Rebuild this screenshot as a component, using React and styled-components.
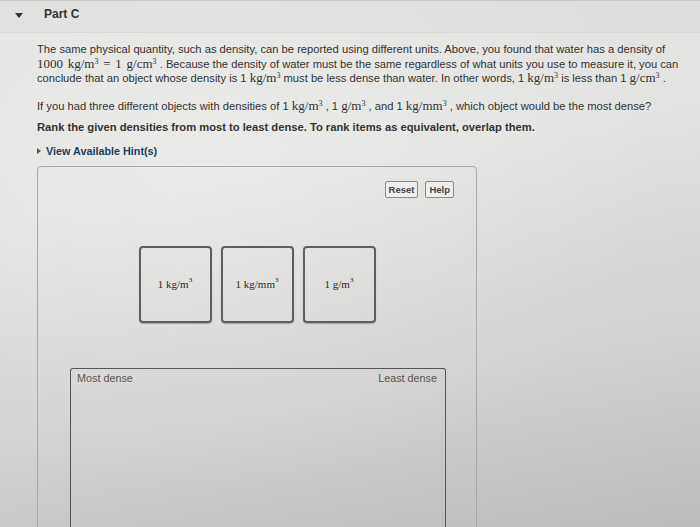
import React from "react";
import styled, { createGlobalStyle } from "styled-components";

const GlobalStyle = createGlobalStyle`
  html, body {
    margin: 0;
    padding: 0;
    height: 100%;
    overflow: hidden;
  }
  body {
    font-family: "Liberation Sans", Arial, sans-serif;
    color: #333;
    background: linear-gradient(170deg, #e4e4e2 0%, #e3e3e1 35%, #d2d1cf 70%, #bdbcba 100%);
  }
`;

const Page = styled.div`
  width: 700px;
  height: 527px;
  overflow: hidden;
  background: radial-gradient(ellipse at 30% 30%, rgba(255, 255, 255, 0.25), rgba(255, 255, 255, 0) 65%);
`;

const Header = styled.div`
  display: flex;
  align-items: center;
  gap: 21px;
  height: 31px;
  padding-left: 15px;
  border-top: 1px solid #c9c9c7;
  border-bottom: 1px solid #d9d9d7;
  background: rgba(0, 0, 0, 0.02);
`;

const Caret = styled.span`
  width: 0;
  height: 0;
  border-left: 4px solid transparent;
  border-right: 4px solid transparent;
  border-top: 5px solid #333;
  margin-top: -3px;
`;

const PartTitle = styled.div`
  font-size: 12px;
  font-weight: bold;
  color: #333;
  margin-top: -5px;
`;

const Body = styled.div`
  padding: 9px 0 0 37px;
  width: 656px;
`;

const Para = styled.p`
  margin: 0 0 ${(p) => p.$gap || 9}px 0;
  font-size: 11.2px;
  line-height: 14.5px;
  font-weight: ${(p) => (p.$bold ? "bold" : "normal")};
`;

const M = styled.span`
  font-family: "Liberation Serif", "Times New Roman", serif;
  font-size: 13px;
  line-height: 1;
  word-spacing: 1.5px;
  white-space: nowrap;
  sup {
    font-size: 8px;
    position: relative;
    top: -4px;
    vertical-align: baseline;
    line-height: 0;
  }
`;

const Hint = styled.div`
  display: flex;
  align-items: center;
  gap: 5px;
  font-size: 10.8px;
  font-weight: bold;
  color: #1d3f5c;
  margin-top: 10px;
`;

const HintCaret = styled.span`
  width: 0;
  height: 0;
  border-top: 3px solid transparent;
  border-bottom: 3px solid transparent;
  border-left: 4px solid #555;
`;

const Panel = styled.div`
  margin-top: 9px;
  width: 440px;
  height: 400px;
  box-sizing: border-box;
  border: 1px solid #a9a9a7;
  border-radius: 4px;
  padding: 14px 22px 0 32px;
  display: flex;
  flex-direction: column;
`;

const Toolbar = styled.div`
  display: flex;
  justify-content: flex-end;
  gap: 7px;
`;

const SmallButton = styled.button`
  font-family: "Liberation Sans", Arial, sans-serif;
  font-size: 9.5px;
  font-weight: bold;
  color: #444;
  background: #eeeeec;
  border: 1px solid #8a8a88;
  border-radius: 2px;
  padding: 2px 3px;
  height: 17px;
  line-height: 11px;
`;

const Tiles = styled.div`
  display: flex;
  justify-content: center;
  gap: 9px;
  margin-top: 48px;
  padding-right: 10px;
`;

const Tile = styled.div`
  width: 69px;
  height: 73px;
  border: 2px solid #5f5f5d;
  border-radius: 4px;
  display: flex;
  align-items: center;
  justify-content: center;
  font-family: "Liberation Serif", "Times New Roman", serif;
  font-size: 11px;
  color: #2a2a2a;
  box-shadow: 0 1px 1px rgba(0, 0, 0, 0.25);
  sup {
    font-size: 7px;
    position: relative;
    top: -4px;
    vertical-align: baseline;
    line-height: 0;
  }
`;

const DropZone = styled.div`
  margin-top: 45px;
  width: 376px;
  height: 200px;
  box-sizing: border-box;
  border: 1px solid #555;
  border-bottom: none;
  border-radius: 3px 3px 0 0;
  display: flex;
  justify-content: space-between;
  padding: 3px 8px 0 6px;
  font-size: 10.8px;
  color: #555;
`;

const tiles = [
  ["1 kg/m", "3"],
  ["1 kg/mm", "3"],
  ["1 g/m", "3"],
];

export default function App() {
  return (
    <Page>
      <GlobalStyle />
      <Header>
        <Caret />
        <PartTitle>Part C</PartTitle>
      </Header>
      <Body>
        <Para $gap={13}>
          The same physical quantity, such as density, can be reported using different units. Above, you found that water has a density of{" "}
          <M>
            1000 kg/m<sup>3</sup> = 1 g/cm<sup>3</sup>
          </M>{" "}
          . Because the density of water must be the same regardless of what units you use to measure it, you can conclude that an object whose density is 1{" "}
          <M>
            kg/m<sup>3</sup>
          </M>{" "}
          must be less dense than water. In other words, 1{" "}
          <M>
            kg/m<sup>3</sup>
          </M>{" "}
          is less than 1{" "}
          <M>
            g/cm<sup>3</sup>
          </M>{" "}
          .
        </Para>
        <Para $gap={7}>
          If you had three different objects with densities of 1{" "}
          <M>
            kg/m<sup>3</sup>
          </M>{" "}
          , 1{" "}
          <M>
            g/m<sup>3</sup>
          </M>{" "}
          , and 1{" "}
          <M>
            kg/mm<sup>3</sup>
          </M>{" "}
          , which object would be the most dense?
        </Para>
        <Para $bold $gap={0}>
          Rank the given densities from most to least dense. To rank items as equivalent, overlap them.
        </Para>
        <Hint>
          <HintCaret />
          View Available Hint(s)
        </Hint>
        <Panel>
          <Toolbar>
            <SmallButton>Reset</SmallButton>
            <SmallButton>Help</SmallButton>
          </Toolbar>
          <Tiles>
            {tiles.map(([t, s]) => (
              <Tile key={t}>
                {t}
                <sup>{s}</sup>
              </Tile>
            ))}
          </Tiles>
          <DropZone>
            <span>Most dense</span>
            <span>Least dense</span>
          </DropZone>
        </Panel>
      </Body>
    </Page>
  );
}
